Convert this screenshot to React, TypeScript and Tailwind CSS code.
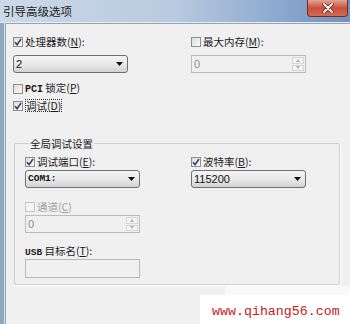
import React from "react";

const cjk = "font-['Noto_Sans_CJK_SC','Noto_Sans',sans-serif]";

function Check({ checked = false, disabled = false }: { checked?: boolean; disabled?: boolean }) {
  return (
    <span
      className={
        disabled
          ? "w-[10px] h-[10px] border border-[#c4c4c4] bg-[#f4f4f4] flex items-center justify-center shrink-0"
          : "w-[10px] h-[10px] border border-[#8e8f8f] bg-gradient-to-br from-[#dcdcdc] to-[#fbfbfb] flex items-center justify-center shrink-0"
      }
    >
      {checked && (
        <svg width="8" height="8" viewBox="0 0 8 8">
          <path d="M1 4.2 L3.1 6.6 L7 1" stroke="#34446a" strokeWidth="1.6" fill="none" />
        </svg>
      )}
    </span>
  );
}

function Row({ children }: { children: React.ReactNode }) {
  return <div className={`flex items-center gap-[2px] h-[13px] text-[10.5px] leading-[13px] text-[#1b1b1b] ${cjk}`}>{children}</div>;
}

function Combo({ value, mono = false, className = "" }: { value: string; mono?: boolean; className?: string }) {
  return (
    <div
      className={`w-[115px] h-[18px] border border-[#707070] rounded-[3px] bg-gradient-to-b from-[#f4f4f4] via-[#e9e9e9] to-[#d3d3d3] flex items-center justify-between pl-[2px] pr-[4px] ${className}`}
    >
      <span
        className={
          mono
            ? "font-['Liberation_Mono',monospace] font-bold text-[9.5px] leading-[12px] text-[#111]"
            : "font-['Liberation_Sans',Arial,sans-serif] text-[11px] leading-[12px] text-[#111]"
        }
      >
        {value}
      </span>
      <svg width="7" height="4" viewBox="0 0 7 4">
        <path d="M0 0 H7 L3.5 4 Z" fill="#111" />
      </svg>
    </div>
  );
}

function Spin({ className = "" }: { className?: string }) {
  return (
    <div className={`w-[115px] h-[18px] border border-[#b8bcc0] bg-[#f0f0f0] flex items-stretch ${className}`}>
      <span className="flex-1 pl-[2px] font-['Liberation_Sans',Arial,sans-serif] text-[11px] leading-[16px] text-[#8d8d8d]">0</span>
      <div className="w-[14px] flex flex-col gap-[1px] p-[1px]">
        <div className="flex-1 border border-[#d6d6d6] bg-[#f4f4f4] flex items-center justify-center">
          <svg width="4" height="3" viewBox="0 0 4 3">
            <path d="M0 3 H4 L2 0 Z" fill="#b0b0b0" />
          </svg>
        </div>
        <div className="flex-1 border border-[#d6d6d6] bg-[#f4f4f4] flex items-center justify-center">
          <svg width="4" height="3" viewBox="0 0 4 3">
            <path d="M0 0 H4 L2 3 Z" fill="#b0b0b0" />
          </svg>
        </div>
      </div>
    </div>
  );
}

export default function App() {
  return (
    <div className="w-[350px] h-[324px] relative overflow-hidden bg-[#f0f0f0]">
      {/* title bar */}
      <div className="h-[22px] bg-gradient-to-r from-[#ccd9e8] via-[#b8cadf] to-[#6e92c1] flex items-start justify-between">
        <span className={`pl-[3px] pt-[4px] text-[11.5px] leading-[14px] text-[#202020] ${cjk}`}>引导高级选项</span>
        <div className="mr-[2px] w-[41px] h-[17px] rounded-b-[4px] border border-t-0 border-[#7d2a20] bg-gradient-to-b from-[#e3a493] via-[#c9503f] to-[#d46a52] flex items-center justify-center">
          <svg width="12" height="10" viewBox="0 0 12 10">
            <path d="M2 1 L10 9 M10 1 L2 9" stroke="#5a1a12" strokeWidth="3.2" strokeLinecap="round" />
            <path d="M2 1 L10 9 M10 1 L2 9" stroke="#ffffff" strokeWidth="1.8" strokeLinecap="round" />
          </svg>
        </div>
      </div>
      <div className="h-[1px] bg-[#e6edf4]" />
      <div className="flex h-[301px]">
        <div className="w-[4px] bg-[#8ea6c1]" />
        <div className="w-[1px] bg-[#d9e2eb]" />
        <div className="flex-1 border-l border-t border-[#98a3ae] pl-[7px] pt-[11px]">
          <div className="flex">
            <div className="w-[115px]">
              <Row>
                <Check checked />
                <span>
                  处理器数(<u>N</u>):
                </span>
              </Row>
              <Combo value="2" className="mt-[7px]" />
            </div>
            <div className="ml-[63px] w-[115px]">
              <Row>
                <Check />
                <span>
                  最大内存(<u>M</u>):
                </span>
              </Row>
              <div className="mt-[7px]">
                <Spin />
              </div>
            </div>
          </div>
          <div className="mt-[9px]">
            <Row>
              <Check />
              <span>
                <span className="font-['Liberation_Mono',monospace] font-bold text-[10px]">PCI</span> 锁定(<u>P</u>)
              </span>
            </Row>
          </div>
          <div className="mt-[4px]">
            <Row>
              <Check checked />
              <span className="border border-dotted border-[#333] leading-[11px] px-[0px]">
                调试(<u>D</u>)
              </span>
            </Row>
          </div>
          <fieldset className="mt-[25px] ml-[1px] w-[326px] border border-[#d0d0d0] rounded-[2px] shadow-[1px_1px_0_#ffffff] pl-[10px] pt-[5px] pb-[6px]">
            <legend className={`ml-[4px] px-[1px] text-[10.5px] leading-[13px] text-[#1b1b1b] ${cjk}`}>全局调试设置</legend>
            <div className="flex">
              <div className="w-[115px]">
                <Row>
                  <Check checked />
                  <span>
                    调试端口(<u>E</u>):
                  </span>
                </Row>
                <Combo value="COM1:" mono className="mt-[2px]" />
                <div className="mt-[12px] text-[#a3a3a3]">
                  <div className={`flex items-center gap-[2px] h-[13px] text-[10.5px] leading-[13px] text-[#a0a0a0] ${cjk}`}>
                    <Check disabled />
                    <span>
                      通道(<u>C</u>)
                    </span>
                  </div>
                </div>
                <Spin className="mt-[2px]" />
                <div className="mt-[12px]">
                  <Row>
                    <span>
                      <span className="font-['Liberation_Mono',monospace] font-bold text-[9.5px]">USB</span> 目标名(<u>T</u>):
                    </span>
                  </Row>
                </div>
                <div className="mt-[1px] w-[115px] h-[19px] border border-[#b5b9bd] bg-[#f0f0f0]" />
              </div>
              <div className="ml-[51px] w-[115px]">
                <Row>
                  <Check checked />
                  <span>
                    波特率(<u>B</u>):
                  </span>
                </Row>
                <Combo value="115200" className="mt-[2px]" />
              </div>
            </div>
          </fieldset>
        </div>
      </div>
      {/* watermark overlay */}
      <div className="absolute left-[225px] top-[286px] w-[125px] h-[9px] bg-[#f9f9f9]" />
      <div className="absolute left-[200px] top-[295px] w-[150px] h-[29px] bg-white">
        <div className="pl-[12px] pt-[9px] font-['Liberation_Mono','Courier_New',monospace] text-[13.3px] leading-[15px] text-[#cc2020]">
          www.qihang56.com
        </div>
      </div>
    </div>
  );
}
